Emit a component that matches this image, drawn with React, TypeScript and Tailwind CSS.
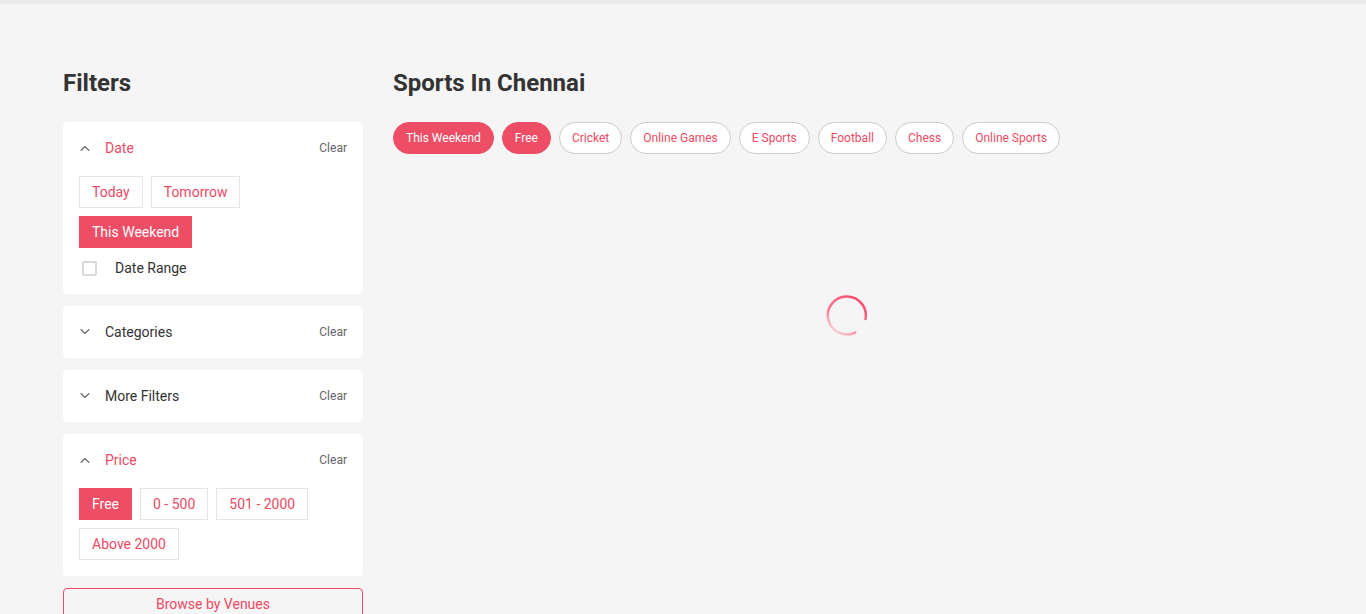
import { ReactNode } from "react";

const PINK = "text-[#ee4a64]";

function Chevron({ up }: { up: boolean }) {
  return (
    <svg width="10" height="6" viewBox="0 0 10 6" fill="none" className="shrink-0">
      <path
        d={up ? "M1 5.5L5 1.5L9 5.5" : "M1 0.5L5 4.5L9 0.5"}
        stroke="#666"
        strokeWidth="1.1"
        strokeLinecap="round"
        strokeLinejoin="round"
      />
    </svg>
  );
}

function FilterCard({ title, open, children }: { title: string; open: boolean; children?: ReactNode }) {
  return (
    <div className="rounded-[4px] bg-white px-4 py-4">
      <div className="flex h-5 items-center">
        <div className="flex w-[26px] pl-[1px]">
          <Chevron up={open} />
        </div>
        <span className={`text-sm ${open ? PINK : "text-[#333]"}`}>{title}</span>
        <span className="ml-auto text-xs text-[#666]">Clear</span>
      </div>
      {children && <div className="mt-[18px]">{children}</div>}
    </div>
  );
}

function Opt({ label, active }: { label: string; active?: boolean }) {
  return (
    <div
      className={`flex h-8 items-center border px-3 pb-[1px] text-sm ${
        active ? "border-[#ee4d66] bg-[#ee4d66] text-white" : `border-[#e5e5e5] bg-white ${PINK}`
      }`}
    >
      {label}
    </div>
  );
}

function Chip({ label, active }: { label: string; active?: boolean }) {
  return (
    <div
      className={`flex h-8 items-center rounded-full border px-3 text-xs ${
        active ? "border-[#ee4d66] bg-[#ee4d66] text-white" : `border-[#cccccc] bg-white ${PINK}`
      }`}
    >
      {label}
    </div>
  );
}

export default function App() {
  const chips = ["Cricket", "Online Games", "E Sports", "Football", "Chess", "Online Sports"];
  return (
    <div className="min-h-screen bg-[#f5f5f5]" style={{ fontFamily: "Roboto, 'Liberation Sans', sans-serif" }}>
      <div className="h-1 bg-[#ebebeb]" />
      <div className="flex gap-[30px] px-[63px] pt-16">
        <aside className="w-[300px] shrink-0">
          <h2 className="mb-6 text-2xl font-bold leading-[30px] text-[#333]">Filters</h2>
          <div className="flex flex-col gap-3">
            <FilterCard title="Date" open>
              <div className="flex flex-wrap gap-2">
                <Opt label="Today" />
                <Opt label="Tomorrow" />
                <Opt label="This Weekend" active />
              </div>
              <div className="mt-[10px] flex items-center">
                <div className="ml-[3px] h-[15px] w-[15px] rounded-[2px] border-2 border-[#d9d9d9]" />
                <span className="ml-[18px] text-sm text-[#333]">Date Range</span>
              </div>
            </FilterCard>
            <FilterCard title="Categories" open={false} />
            <FilterCard title="More Filters" open={false} />
            <FilterCard title="Price" open>
              <div className="flex flex-wrap gap-2">
                <Opt label="Free" active />
                <Opt label="0 - 500" />
                <Opt label="501 - 2000" />
                <Opt label="Above 2000" />
              </div>
            </FilterCard>
            <div className={`flex h-[31px] items-center justify-center rounded-[4px] border border-[#ee4d66] text-sm ${PINK}`}>
              Browse by Venues
            </div>
          </div>
        </aside>
        <main className="flex-1">
          <h1 className="mb-6 text-2xl font-bold leading-[30px] text-[#333]">Sports In Chennai</h1>
          <div className="flex flex-wrap gap-2">
            <Chip label="This Weekend" active />
            <Chip label="Free" active />
            {chips.map((c) => (
              <Chip key={c} label={c} />
            ))}
          </div>
          <div className="flex justify-center pt-[138px]">
            <svg width="46" height="46" viewBox="0 0 46 46">
              <defs>
                <linearGradient id="sp" x1="1" y1="0" x2="0" y2="1">
                  <stop offset="0" stopColor="#f84464" />
                  <stop offset="0.6" stopColor="#f84464" stopOpacity="0.7" />
                  <stop offset="1" stopColor="#f84464" stopOpacity="0" />
                </linearGradient>
              </defs>
              <path
                d="M39.5 30A19 19 0 1 0 27 41.5"
                fill="none"
                stroke="url(#sp)"
                strokeWidth="2.5"
                strokeLinecap="round"
                transform="rotate(-10 23 23)"
              />
            </svg>
          </div>
        </main>
      </div>
    </div>
  );
}
